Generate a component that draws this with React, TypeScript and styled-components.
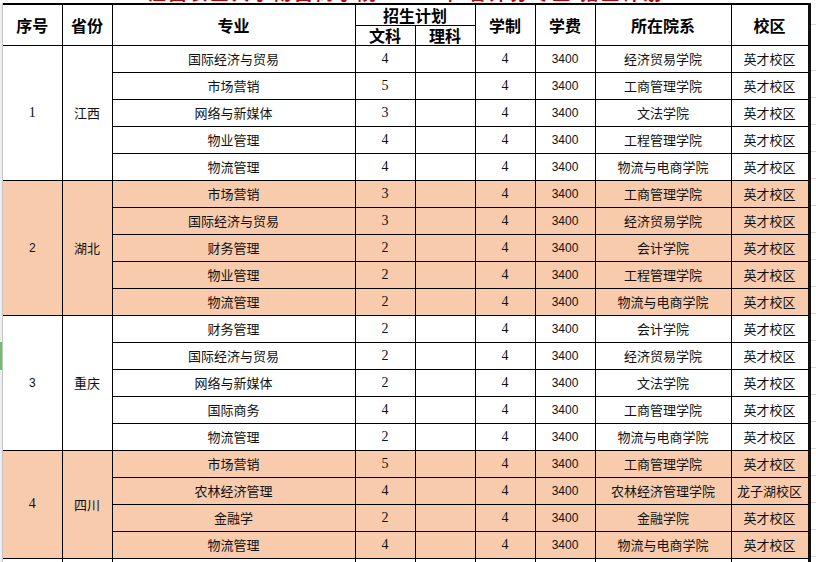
import React from "react";
import styled, { createGlobalStyle } from "styled-components";

const GlobalStyle = createGlobalStyle`
  html, body {
    margin: 0;
    padding: 0;
    background: #fff;
    overflow: hidden;
  }
  body {
    font-family: "Noto Sans CJK SC", "Noto Sans", sans-serif;
  }
`;

const PEACH = "#f8cbad";

type Major = { name: string; arts: string; dept: string; campus?: string };
type Group = { no: string; province: string; fill: boolean; serifNo?: boolean; majors: Major[] };

const groups: Group[] = [
  {
    no: "1",
    province: "江西",
    fill: false,
    serifNo: true,
    majors: [
      { name: "国际经济与贸易", arts: "4", dept: "经济贸易学院" },
      { name: "市场营销", arts: "5", dept: "工商管理学院" },
      { name: "网络与新媒体", arts: "3", dept: "文法学院" },
      { name: "物业管理", arts: "4", dept: "工程管理学院" },
      { name: "物流管理", arts: "4", dept: "物流与电商学院" },
    ],
  },
  {
    no: "2",
    province: "湖北",
    fill: true,
    majors: [
      { name: "市场营销", arts: "3", dept: "工商管理学院" },
      { name: "国际经济与贸易", arts: "3", dept: "经济贸易学院" },
      { name: "财务管理", arts: "2", dept: "会计学院" },
      { name: "物业管理", arts: "2", dept: "工程管理学院" },
      { name: "物流管理", arts: "2", dept: "物流与电商学院" },
    ],
  },
  {
    no: "3",
    province: "重庆",
    fill: false,
    majors: [
      { name: "财务管理", arts: "2", dept: "会计学院" },
      { name: "国际经济与贸易", arts: "2", dept: "经济贸易学院" },
      { name: "网络与新媒体", arts: "2", dept: "文法学院" },
      { name: "国际商务", arts: "4", dept: "工商管理学院" },
      { name: "物流管理", arts: "2", dept: "物流与电商学院" },
    ],
  },
  {
    no: "4",
    province: "四川",
    fill: true,
    serifNo: true,
    majors: [
      { name: "市场营销", arts: "5", dept: "工商管理学院" },
      { name: "农林经济管理", arts: "4", dept: "农林经济管理学院", campus: "龙子湖校区" },
      { name: "金融学", arts: "2", dept: "金融学院" },
      { name: "物流管理", arts: "4", dept: "物流与电商学院" },
    ],
  },
];

const widths = [59, 50, 243, 60, 60, 60, 60, 136, 78];

const Page = styled.div`
  width: 816px;
  height: 562px;
  display: flex;
  flex-direction: column;
  overflow: hidden;
`;

const Title = styled.div`
  height: 3px;
  overflow: hidden;
  padding-left: 3px;
  width: 806px;
  text-align: center;
`;

const TitleText = styled.div`
  margin-top: -17px;
  height: 18px;
  font-size: 18px;
  line-height: 18px;
  font-weight: 700;
  color: #c00000;
  letter-spacing: 3px;
  white-space: nowrap;
`;

const Sheet = styled.div`
  flex: 1;
  display: flex;
  min-height: 0;
`;

const Gutter = styled.div`
  width: 3px;
  flex: none;
  display: flex;
  flex-direction: column;
  background: #ededed;
  border-right: 1px solid #c4c4c4;
  box-sizing: border-box;
`;

const GreenMark = styled.div`
  margin-top: 339px;
  height: 28px;
  width: 2px;
  background: #6cbf6c;
`;

const Filler = styled.div`
  flex: 1;
  background-color: #fff;
  background-image: repeating-linear-gradient(
    to bottom,
    transparent 0,
    transparent 26px,
    #dadada 26px,
    #dadada 27px
  );
  background-position: 0 41px;
`;

const Table = styled.table`
  width: 807px;
  flex: none;
  border-collapse: collapse;
  table-layout: fixed;
  border-top: 2px solid #000;
  border-right: 3px solid #111;
  border-left: hidden;
`;

const HeadRow = styled.tr<{ $h: number }>`
  height: ${(p) => p.$h}px;
`;

const BodyRow = styled.tr<{ $fill: boolean }>`
  height: 27px;
  background: ${(p) => (p.$fill ? PEACH : "#fff")};
`;

const StubRow = styled.tr`
  height: 6px;
`;

const HeadCell = styled.th`
  padding: 0;
  border: 1px solid #000;
  font-size: 16px;
  line-height: 1;
  font-weight: 700;
  color: #000;
  text-align: center;
  vertical-align: middle;
  white-space: nowrap;
`;

const Cell = styled.td<{ $font?: "cjk" | "serif" | "sans" }>`
  padding: 0;
  border: 1px solid #000;
  color: #111;
  text-align: center;
  vertical-align: middle;
  white-space: nowrap;
  overflow: hidden;
  line-height: 1;
  font-family: ${(p) =>
    p.$font === "serif"
      ? '"Liberation Serif", serif'
      : p.$font === "sans"
      ? '"Liberation Sans", sans-serif'
      : '"Noto Sans CJK SC", sans-serif'};
  font-size: ${(p) => (p.$font === "sans" ? 12 : p.$font === "serif" ? 14 : 13)}px;
`;

export default function App() {
  return (
    <>
      <GlobalStyle />
      <Page>
        <Title>
          <TitleText>江西农业大学南昌商学院 2020年 省外分专业 招生计划</TitleText>
        </Title>
        <Sheet>
          <Gutter>
            <GreenMark />
          </Gutter>
          <Table>
            <colgroup>
              {widths.map((w, i) => (
                <col key={i} style={{ width: w }} />
              ))}
            </colgroup>
            <thead>
              <HeadRow $h={21}>
                <HeadCell rowSpan={2}>序号</HeadCell>
                <HeadCell rowSpan={2}>省份</HeadCell>
                <HeadCell rowSpan={2}>专业</HeadCell>
                <HeadCell colSpan={2}>招生计划</HeadCell>
                <HeadCell rowSpan={2}>学制</HeadCell>
                <HeadCell rowSpan={2}>学费</HeadCell>
                <HeadCell rowSpan={2}>所在院系</HeadCell>
                <HeadCell rowSpan={2}>校区</HeadCell>
              </HeadRow>
              <HeadRow $h={20}>
                <HeadCell>文科</HeadCell>
                <HeadCell>理科</HeadCell>
              </HeadRow>
            </thead>
            <tbody>
              {groups.map((g) =>
                g.majors.map((m, i) => (
                  <BodyRow key={g.no + i} $fill={g.fill}>
                    {i === 0 && (
                      <>
                        <Cell rowSpan={g.majors.length} $font={g.serifNo ? "serif" : "sans"}>
                          {g.no}
                        </Cell>
                        <Cell rowSpan={g.majors.length}>{g.province}</Cell>
                      </>
                    )}
                    <Cell>{m.name}</Cell>
                    <Cell $font="serif">{m.arts}</Cell>
                    <Cell />
                    <Cell $font="serif">4</Cell>
                    <Cell $font="sans">3400</Cell>
                    <Cell>{m.dept}</Cell>
                    <Cell>{m.campus ?? "英才校区"}</Cell>
                  </BodyRow>
                ))
              )}
              <StubRow>
                {widths.map((_, i) => (
                  <Cell key={i} />
                ))}
              </StubRow>
            </tbody>
          </Table>
          <Filler />
        </Sheet>
      </Page>
    </>
  );
}
